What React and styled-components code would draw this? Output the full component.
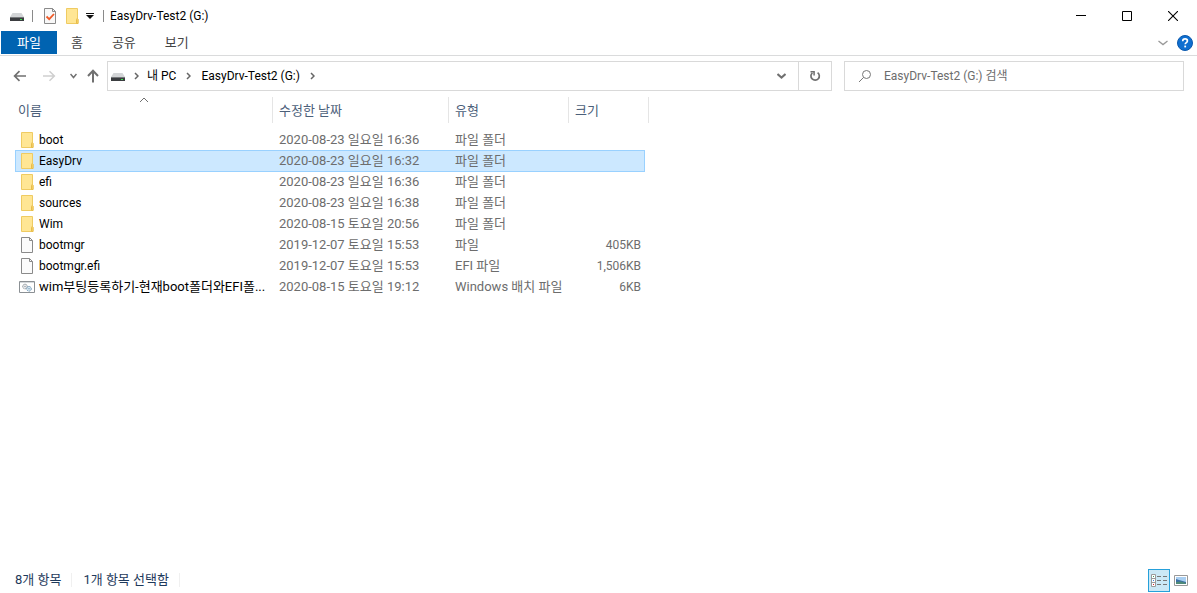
import React, { useState } from 'react';
import styled, { createGlobalStyle, css } from 'styled-components';

const GlobalStyle = createGlobalStyle`
  * {
    box-sizing: border-box;
  }

  body {
    margin: 0;
    background: #fff;
    color: #000;
    font-family: Roboto, 'Noto Sans CJK KR', sans-serif;
    font-size: 13px;
  }

  button,
  input {
    margin: 0;
    padding: 0;
    border: 0;
    background: none;
    color: inherit;
    font: inherit;
  }

  svg {
    display: block;
    flex: none;
  }
`;

const Window = styled.div`
  display: flex;
  flex-direction: column;
  min-height: 100vh;
`;

const TitleBar = styled.header`
  display: flex;
  align-items: center;
  height: 31px;
  padding: 0 1px 0 9px;
`;

const QuickAccess = styled.div`
  display: flex;
  align-items: center;
`;

const QuickButton = styled.button`
  display: flex;
  align-items: center;
  justify-content: center;
  width: ${(props) => props.$width || 22}px;
  height: 22px;
`;

const TitleDivider = styled.span`
  width: 1px;
  height: 12px;
  margin: 0 6px 0 7px;
  background: #8a8a8a;
`;

const Title = styled.h1`
  margin: 0;
  flex: 1;
  font-size: 12px;
  font-weight: normal;
`;

const WindowButton = styled.button`
  display: flex;
  align-items: center;
  justify-content: center;
  width: 46px;
  height: 30px;

  &:hover {
    background: #e5e5e5;
  }
`;

const TabBar = styled.nav`
  display: flex;
  align-items: center;
  height: 25px;
  padding: 0 4px 0 1px;
  border-bottom: 1px solid #dadbdc;
`;

const Tab = styled.button`
  height: 23px;
  margin-bottom: 2px;
  padding: 0 15px 1px 14px;
  color: #444;

  ${(props) =>
    props.$file &&
    css`
      padding: 0 16px 1px;
      background: #0063b1;
      color: #fff;
    `}
`;

const TabTools = styled.div`
  display: flex;
  align-items: center;
  gap: 9px;
  margin-left: auto;
`;

const NavBar = styled.div`
  display: flex;
  align-items: center;
  height: 40px;
  padding: 0 13px 0 10px;
`;

const NavButton = styled.button`
  display: flex;
  align-items: center;
  justify-content: center;
  width: ${(props) => props.$width}px;
  height: 24px;
`;

const AddressBox = styled.div`
  display: flex;
  flex: 721 1 0;
  align-items: center;
  height: 30px;
  padding-left: 2px;
  border: 1px solid #d9d9d9;
  font-size: 12px;
  line-height: 18px;
`;

const Crumb = styled.button`
  padding: 0 ${(props) => props.$gap || 10}px;
`;

const AddressButton = styled.button`
  display: flex;
  align-items: center;
  justify-content: center;
  width: 33px;
  height: 28px;
  margin-left: ${(props) => (props.$push ? 'auto' : 0)};
  border-left: ${(props) => (props.$divided ? '1px solid #d9d9d9' : 0)};
`;

const SearchBox = styled.label`
  display: flex;
  flex: 325 1 0;
  align-items: center;
  gap: 12px;
  height: 30px;
  margin-left: 12px;
  padding-left: 13px;
  border: 1px solid #d9d9d9;
`;

const SearchInput = styled.input`
  flex: 1;
  min-width: 0;
  outline: none;
  font-size: 12px;

  &::placeholder {
    color: #6d6d6d;
    opacity: 1;
  }
`;

const Content = styled.main`
  flex: 1;
  padding: 1px 0 0 15px;
`;

const FileTable = styled.table`
  width: 634px;
  table-layout: fixed;
  border-spacing: 0;
`;

const HeadCell = styled.th`
  position: relative;
  height: 26px;
  padding: 0;
  border-left: ${(props) => (props.$first ? 0 : '1px solid #e5e5e5')};
  border-right: ${(props) => (props.$last ? '1px solid #e5e5e5' : 0)};
  color: #4c607a;
  font-weight: normal;
  text-align: left;
`;

const SortButton = styled.button`
  width: 100%;
  height: 26px;
  padding-bottom: 2px;
  padding-left: ${(props) => (props.$first ? 3 : 6)}px;
  text-align: left;
`;

const SortMark = styled.span`
  position: absolute;
  top: 0;
  left: 50%;
  transform: translateX(-50%);
`;

const BodyGap = styled.tbody`
  td {
    height: 6px;
    padding: 0;
  }
`;

const Row = styled.tr`
  cursor: default;

  ${(props) =>
    props.$selected &&
    css`
      td:not(:last-child) {
        background: #cce8ff;
        box-shadow: 0 1px 0 #99d1ff, inset 0 1px 0 #99d1ff;
      }

      td:first-child {
        border-left-color: #99d1ff;
      }

      td:nth-child(4) {
        border-right: 1px solid #99d1ff;
        padding-right: 3px;
      }
    `}
`;

const Cell = styled.td`
  height: 21px;
  padding: 0 4px 0 7px;
  color: #6d6d6d;
  line-height: 20px;
  white-space: nowrap;
`;

const NameCell = styled(Cell)`
  padding: 0 0 0 3px;
  border-left: 1px solid transparent;
  color: #000;
`;

const SizeCell = styled(Cell)`
  font-size: 12px;
  text-align: right;
`;

const FileName = styled.div`
  display: flex;
  align-items: center;
  gap: 4px;
  font-size: ${(props) => (props.$hangul ? 13 : 12)}px;
`;

const EdgeCell = styled.td`
  padding: 0;
`;

const StatusBar = styled.footer`
  display: flex;
  align-items: center;
  height: 25px;
  padding: 0 8px 1px 15px;
  color: #1e395b;
`;

const StatusText = styled.span`
  padding-right: 10px;
  margin-right: 11px;
  border-right: 1px solid #f0f0f0;
  line-height: 14px;
`;

const ViewButtons = styled.div`
  display: flex;
  align-items: center;
  gap: 2px;
  margin-left: auto;
`;

const ViewButton = styled.button`
  display: flex;
  align-items: center;
  justify-content: center;
  width: ${(props) => (props.$active ? 22 : 17)}px;
  height: 23px;
  border: ${(props) => (props.$active ? '1px solid #26a0da' : 0)};
  background: ${(props) => (props.$active ? '#cbe8f6' : 'none')};
`;

const DriveIcon = () => (
  <svg width="16" height="16" viewBox="0 0 16 16">
    <path d="M3.5 5h9L15 9H1z" fill="#d3d5d7" />
    <path d="M1 9h14v4H1z" fill="#3b3d40" />
    <path d="M1 9h14v1H1z" fill="#77797c" />
    <path d="M11 11h2v1h-2z" fill="#3fe04f" />
  </svg>
);

const FolderIcon = () => (
  <svg width="16" height="16" viewBox="0 0 16 16">
    <path d="M2.5.5h11v10l.5 1v4H2.5z" fill="#ffe694" stroke="#efcb62" />
    <path d="M12.5 15.5v-4l.7-1 .8 1v4z" fill="#fbd976" stroke="#e8bd4a" />
  </svg>
);

const FileIcon = () => (
  <svg width="16" height="16" viewBox="0 0 16 16">
    <path d="M2.5.5h8l3 3v12h-11z" fill="#fbfbfb" stroke="#8a8a8a" />
    <path d="M10.5.5v3h3" fill="none" stroke="#8a8a8a" />
  </svg>
);

const BatchIcon = () => (
  <svg width="16" height="16" viewBox="0 0 16 16">
    <path d="M.5 2.5h15v11H.5z" fill="#fff" stroke="#8b9094" />
    <path d="M1 3h14v1H1z" fill="#d5d9dc" />
    <circle cx="6" cy="7.5" r="2.3" fill="#eef1f3" stroke="#8b9399" strokeDasharray="1.5 .5" />
    <circle cx="6" cy="7.5" r=".7" fill="#8b9399" />
    <circle cx="10" cy="9.8" r="2.3" fill="#dcebf5" stroke="#6d96b5" strokeDasharray="1.5 .5" />
    <circle cx="10" cy="9.8" r=".7" fill="#6d96b5" />
  </svg>
);

const PropertiesIcon = () => (
  <svg width="16" height="16" viewBox="0 0 16 16">
    <path d="M2.5.5h8l3 3v12h-11z" fill="#f8f8f8" stroke="#8a8a8a" />
    <path d="M10.5.5v3h3" fill="none" stroke="#8a8a8a" />
    <path d="M4.5 8.5l2.7 2.7L12 6" fill="none" stroke="#ef5a28" strokeWidth="1.8" />
  </svg>
);

const CustomizeIcon = () => (
  <svg width="8" height="6" viewBox="0 0 8 6">
    <path d="M0 0h8v1H0zM0 2h8L4 6z" fill="#111" />
  </svg>
);

const MinimizeIcon = () => (
  <svg width="10" height="11" viewBox="0 0 10 11">
    <path d="M0 5.5h10" stroke="#000" />
  </svg>
);

const MaximizeIcon = () => (
  <svg width="10" height="10" viewBox="0 0 10 10">
    <path d="M.5.5h9v9h-9z" fill="none" stroke="#000" />
  </svg>
);

const CloseIcon = () => (
  <svg width="10" height="10" viewBox="0 0 10 10">
    <path d="M0 0l10 10M10 0L0 10" stroke="#000" strokeWidth="1.1" />
  </svg>
);

const HelpIcon = () => (
  <svg width="16" height="16" viewBox="0 0 16 16">
    <circle cx="8" cy="8" r="7.5" fill="#0f6fd0" stroke="#0a58ad" />
    <path
      d="M5.7 6.2c0-1.5 1-2.3 2.4-2.3s2.3.8 2.3 2c0 1.6-2.2 1.7-2.2 3.3"
      fill="none"
      stroke="#fff"
      strokeWidth="1.7"
    />
    <path d="M7.3 10.6h1.8v1.8H7.3z" fill="#fff" />
  </svg>
);

const ArrowIcon = ({ up }) => (
  <svg width="14" height="14" viewBox="0 0 14 14">
    <path
      d={up ? 'M7 13.5V2M2 7l5-5.2L12 7' : 'M13 7H2M6.5 2.2L1.6 7l4.9 4.8'}
      fill="none"
      stroke="#707070"
      strokeWidth={up ? 2 : 1.7}
    />
  </svg>
);

const ForwardIcon = () => (
  <svg width="14" height="14" viewBox="0 0 14 14">
    <path d="M1 7h11M7.5 2.2L12.4 7l-4.9 4.8" fill="none" stroke="#cfcfcf" strokeWidth="1.5" />
  </svg>
);

const ChevronIcon = ({ width = 8, color = '#707070', stroke = 2, up }) => (
  <svg width={width} height="6" viewBox={`0 0 ${width} 6`}>
    <path
      d={up ? `M.5 5L${width / 2} 1l${width / 2 - 0.5} 4` : `M.5 1L${width / 2} 4.6 ${width - 0.5} 1`}
      fill="none"
      stroke={color}
      strokeWidth={stroke}
    />
  </svg>
);

const CrumbArrow = () => (
  <svg width="5" height="8" viewBox="0 0 5 8">
    <path d="M1 1l3 3-3 3" fill="none" stroke="#666" strokeWidth="1.5" />
  </svg>
);

const RefreshIcon = () => (
  <svg width="12" height="12" viewBox="0 0 12 12">
    <path d="M8.6 2.6A4.2 4.2 0 1 1 3.4 2.8" fill="none" stroke="#707070" strokeWidth="1.7" />
    <path d="M1.5 1.8h3.6v3.6" fill="none" stroke="#707070" strokeWidth="1.5" />
  </svg>
);

const SearchIcon = () => (
  <svg width="14" height="14" viewBox="0 0 14 14">
    <circle cx="8.5" cy="5.5" r="4" fill="none" stroke="#777" />
    <path d="M5.6 8.4L1 13" stroke="#777" />
  </svg>
);

const DetailsIcon = () => (
  <svg width="16" height="13" viewBox="0 0 16 13">
    <path d="M.5.5h4v12h-4zM.5 4.5h4M.5 8.5h4" fill="#fff" stroke="#9a9a9a" />
    <path d="M2 2h1v1H2z" fill="#3c9a5f" />
    <path d="M2 6h1v1H2z" fill="#3e7fe0" />
    <path d="M2 10h1v1H2z" fill="#d8232f" />
    <path d="M6 2.5h4M12 2.5h4M6 6.5h4M12 6.5h4M6 10.5h4M12 10.5h4" stroke="#777" />
  </svg>
);

const ThumbnailIcon = () => (
  <svg width="14" height="11" viewBox="0 0 14 11">
    <path d="M.5.5h13v10H.5z" fill="#fff" stroke="#999" />
    <path d="M2 2h10v5H2z" fill="#a9cff2" />
    <path d="M2 4l3 1 7 2v2H2z" fill="#3a6fa5" />
    <path d="M2 7l5-.5 5 1.5v1H2z" fill="#4f8a78" />
  </svg>
);

const icons = {
  folder: FolderIcon,
  file: FileIcon,
  batch: BatchIcon,
};

const files = [
  { name: 'boot', date: '2020-08-23 일요일 16:36', type: '파일 폴더', size: '', icon: 'folder' },
  { name: 'EasyDrv', date: '2020-08-23 일요일 16:32', type: '파일 폴더', size: '', icon: 'folder' },
  { name: 'efi', date: '2020-08-23 일요일 16:36', type: '파일 폴더', size: '', icon: 'folder' },
  { name: 'sources', date: '2020-08-23 일요일 16:38', type: '파일 폴더', size: '', icon: 'folder' },
  { name: 'Wim', date: '2020-08-15 토요일 20:56', type: '파일 폴더', size: '', icon: 'folder' },
  { name: 'bootmgr', date: '2019-12-07 토요일 15:53', type: '파일', size: '405KB', icon: 'file' },
  { name: 'bootmgr.efi', date: '2019-12-07 토요일 15:53', type: 'EFI 파일', size: '1,506KB', icon: 'file' },
  {
    name: 'wim부팅등록하기-현재boot폴더와EFI폴...',
    date: '2020-08-15 토요일 19:12',
    type: 'Windows 배치 파일',
    size: '6KB',
    icon: 'batch',
  },
];

const App = () => {
  const [selected, setSelected] = useState('EasyDrv');

  return (
    <>
      <GlobalStyle />
      <Window>
        <TitleBar>
          <QuickAccess>
            <QuickButton $width={16} aria-label="시스템 메뉴">
              <DriveIcon />
            </QuickButton>
            <TitleDivider />
            <QuickButton aria-label="속성">
              <PropertiesIcon />
            </QuickButton>
            <QuickButton aria-label="새 폴더">
              <FolderIcon />
            </QuickButton>
            <QuickButton $width={13} aria-label="빠른 실행 도구 모음 사용자 지정">
              <CustomizeIcon />
            </QuickButton>
            <TitleDivider />
          </QuickAccess>
          <Title>EasyDrv-Test2 (G:)</Title>
          <WindowButton aria-label="최소화">
            <MinimizeIcon />
          </WindowButton>
          <WindowButton aria-label="최대화">
            <MaximizeIcon />
          </WindowButton>
          <WindowButton aria-label="닫기">
            <CloseIcon />
          </WindowButton>
        </TitleBar>

        <TabBar>
          <Tab $file>파일</Tab>
          <Tab>홈</Tab>
          <Tab>공유</Tab>
          <Tab>보기</Tab>
          <TabTools>
            <button aria-label="리본 확장">
              <ChevronIcon width={10} color="#999" stroke={1.3} />
            </button>
            <button aria-label="도움말">
              <HelpIcon />
            </button>
          </TabTools>
        </TabBar>

        <NavBar>
          <NavButton $width={20} aria-label="뒤로">
            <ArrowIcon />
          </NavButton>
          <NavButton $width={38} aria-label="앞으로">
            <ForwardIcon />
          </NavButton>
          <NavButton $width={10} aria-label="최근 위치">
            <ChevronIcon width={7} stroke={1.5} />
          </NavButton>
          <NavButton $width={29} aria-label="위로">
            <ArrowIcon up />
          </NavButton>
          <AddressBox>
            <DriveIcon />
            <Crumb $gap={8} aria-label="위치">
              <CrumbArrow />
            </Crumb>
            <button>내 PC</button>
            <Crumb aria-label="내 PC 하위 폴더">
              <CrumbArrow />
            </Crumb>
            <button>EasyDrv-Test2 (G:)</button>
            <Crumb aria-label="하위 폴더">
              <CrumbArrow />
            </Crumb>
            <AddressButton $push aria-label="이전 위치">
              <ChevronIcon width={9} />
            </AddressButton>
            <AddressButton $divided aria-label="새로 고침">
              <RefreshIcon />
            </AddressButton>
          </AddressBox>
          <SearchBox>
            <SearchIcon />
            <SearchInput type="text" aria-label="검색" placeholder="EasyDrv-Test2 (G:) 검색" />
          </SearchBox>
        </NavBar>

        <Content>
          <FileTable>
            <colgroup>
              <col width="257" />
              <col width="176" />
              <col width="120" />
              <col width="77" />
              <col width="4" />
            </colgroup>
            <thead>
              <tr>
                <HeadCell $first aria-sort="ascending">
                  <SortMark>
                    <ChevronIcon width={9} stroke={1} up />
                  </SortMark>
                  <SortButton $first>이름</SortButton>
                </HeadCell>
                <HeadCell>
                  <SortButton>수정한 날짜</SortButton>
                </HeadCell>
                <HeadCell>
                  <SortButton>유형</SortButton>
                </HeadCell>
                <HeadCell $last colSpan={2}>
                  <SortButton>크기</SortButton>
                </HeadCell>
              </tr>
            </thead>
            <BodyGap aria-hidden="true">
              <tr>
                <td colSpan={5} />
              </tr>
            </BodyGap>
            <tbody>
              {files.map((file) => {
                const Icon = icons[file.icon];
                return (
                  <Row
                    key={file.name}
                    $selected={selected === file.name}
                    aria-selected={selected === file.name}
                    onClick={() => setSelected(file.name)}
                  >
                    <NameCell>
                      <FileName $hangul={/[가-힣]/.test(file.name)}>
                        <Icon />
                        {file.name}
                      </FileName>
                    </NameCell>
                    <Cell>{file.date}</Cell>
                    <Cell>{file.type}</Cell>
                    <SizeCell>{file.size}</SizeCell>
                    <EdgeCell />
                  </Row>
                );
              })}
            </tbody>
          </FileTable>
        </Content>

        <StatusBar>
          <StatusText>8개 항목</StatusText>
          <StatusText>1개 항목 선택함</StatusText>
          <ViewButtons>
            <ViewButton $active aria-label="자세히">
              <DetailsIcon />
            </ViewButton>
            <ViewButton aria-label="큰 아이콘">
              <ThumbnailIcon />
            </ViewButton>
          </ViewButtons>
        </StatusBar>
      </Window>
    </>
  );
};

export default App;
